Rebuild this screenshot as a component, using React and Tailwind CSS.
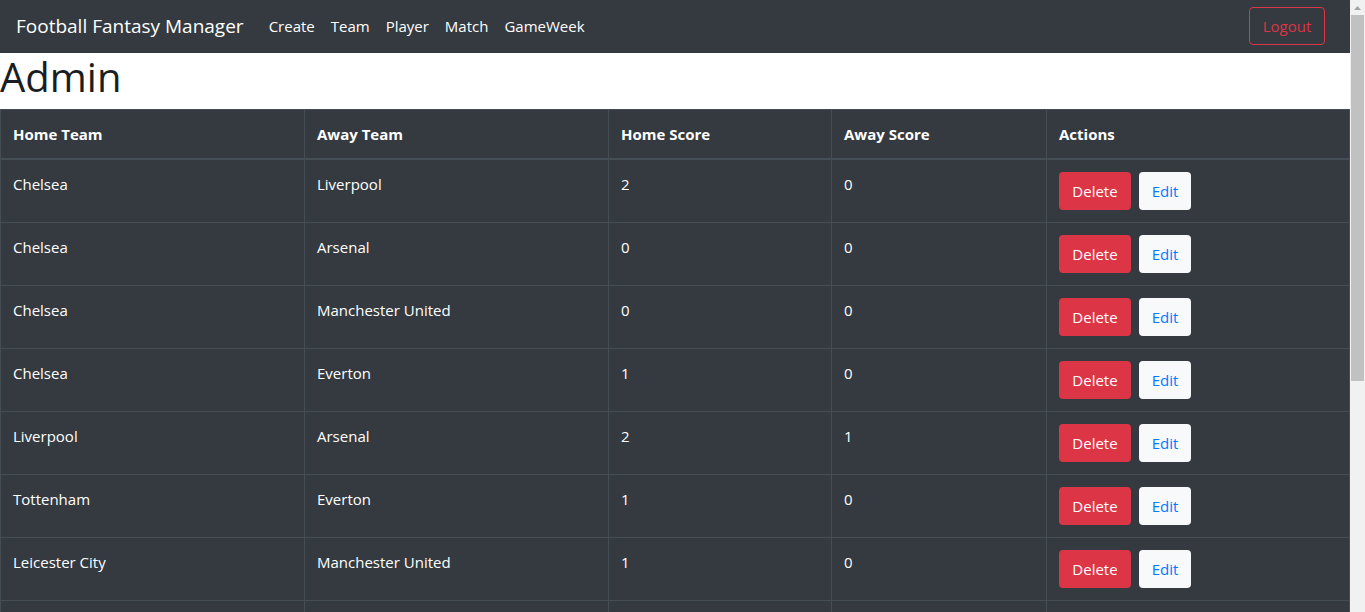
import React from "react";

const matches = [
  ["Chelsea", "Liverpool", 2, 0],
  ["Chelsea", "Arsenal", 0, 0],
  ["Chelsea", "Manchester United", 0, 0],
  ["Chelsea", "Everton", 1, 0],
  ["Liverpool", "Arsenal", 2, 1],
  ["Tottenham", "Everton", 1, 0],
  ["Leicester City", "Manchester United", 1, 0],
  ["Arsenal", "Tottenham", 0, 0],
];

const navLinks = ["Create", "Team", "Player", "Match", "GameWeek"];

const Navbar = () => (
  <nav className="h-[53px] shrink-0 bg-[#343a40] flex items-center px-4 pb-px">
    <span className="text-white text-[19px] mr-[17px]">Football Fantasy Manager</span>
    <ul className="flex">
      {navLinks.map((l) => (
        <li key={l} className="px-2 text-white">
          {l}
        </li>
      ))}
    </ul>
    <button className="ml-auto h-[38px] w-[76px] rounded border border-[#dc3545] text-[#dc3545] mr-[9px]">
      Logout
    </button>
  </nav>
);

const cell = "p-3 leading-6 align-top border border-[#454d55]";

const App = () => {
  return (
    <div className="h-screen flex overflow-hidden text-[15px] text-[#212529] font-['Open_Sans',sans-serif]">
      <div className="w-[1350px] flex flex-col">
        <Navbar />
        <h1 className="shrink-0 text-[40px] leading-[48px] font-medium mb-2 text-[#1a1d21]">Admin</h1>
        <table className="shrink-0 w-[1349px] border-collapse table-fixed bg-[#343a40] text-white">
          <colgroup>
            <col className="w-[304px]" />
            <col className="w-[304px]" />
            <col className="w-[223px]" />
            <col className="w-[215px]" />
            <col className="w-[303px]" />
          </colgroup>
          <thead>
            <tr>
              {["Home Team", "Away Team", "Home Score", "Away Score", "Actions"].map((h) => (
                <th key={h} className={`${cell} text-left font-bold border-b-2`}>
                  {h}
                </th>
              ))}
            </tr>
          </thead>
          <tbody>
            {matches.map((m, i) => (
              <tr key={i}>
                <td className={cell}>{m[0]}</td>
                <td className={cell}>{m[1]}</td>
                <td className={cell}>{m[2]}</td>
                <td className={cell}>{m[3]}</td>
                <td className={cell}>
                  <div className="flex gap-2">
                    <button className="h-[38px] w-[72px] rounded bg-[#dc3545] text-white">Delete</button>
                    <button className="h-[38px] w-[52px] rounded bg-[#f8f9fa] text-[#007bff]">Edit</button>
                  </div>
                </td>
              </tr>
            ))}
          </tbody>
        </table>
      </div>
      <div className="w-[15px] shrink-0 bg-[#f1f1f1] flex flex-col items-center">
        <div className="h-[15px] flex items-center justify-center">
          <svg width="7" height="4" viewBox="0 0 7 4">
            <path d="M0 4 L3.5 0 L7 4 Z" fill="#a3a3a3" />
          </svg>
        </div>
        <div className="w-[13px] h-[366px] bg-[#c1c1c1]" />
      </div>
    </div>
  );
};

export default App;
